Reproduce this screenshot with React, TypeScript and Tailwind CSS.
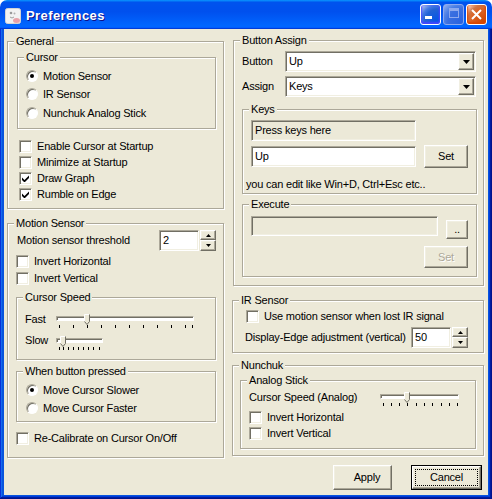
import type { ReactNode } from 'react';

const sunken =
  'border border-t-[#ACA899] border-l-[#ACA899] border-b-white border-r-white shadow-[inset_1px_1px_0_#716F64,inset_-1px_-1px_0_#F1EFE2]';
const raised =
  'bg-[#ECE9D8] border border-t-white border-l-white border-b-[#716F64] border-r-[#716F64] shadow-[inset_-1px_-1px_0_#ACA899,inset_1px_1px_0_#F1EFE2]';

function Group({ title, className = '', children }: { title: string; className?: string; children?: ReactNode }) {
  return (
    <fieldset className={`shrink-0 border border-[#ACA899] shadow-[inset_1px_1px_0_#fff,1px_1px_0_#fff] ${className}`}>
      <legend className="ml-[6px] px-[2px] bg-[#ECE9D8] leading-[13px]">{title}</legend>
      {children}
    </fieldset>
  );
}

function Check({ label, checked = false, className = '' }: { label: string; checked?: boolean; className?: string }) {
  return (
    <div className={`flex items-center h-[16px] gap-[5px] ${className}`}>
      <span className={`w-[13px] h-[13px] bg-white flex items-center justify-center ${sunken}`}>
        {checked && (
          <svg width="7" height="7" viewBox="0 0 7 7">
            <polygon points="0,2.5 2.5,5 7,0.5 7,3 2.5,7.5 0,5" fill="#000" />
          </svg>
        )}
      </span>
      <span>{label}</span>
    </div>
  );
}

function Radio({ label, checked = false, className = '' }: { label: string; checked?: boolean; className?: string }) {
  return (
    <div className={`flex items-center h-[18px] gap-[5px] ${className}`}>
      <span className="w-[12px] h-[12px] rounded-full bg-white border border-t-[#ACA899] border-l-[#ACA899] border-r-white border-b-white shadow-[inset_1px_1px_0_#716F64] flex items-center justify-center">
        {checked && <span className="w-[4px] h-[4px] rounded-full bg-black" />}
      </span>
      <span>{label}</span>
    </div>
  );
}

function Button({ children, className = '', disabled = false }: { children: ReactNode; className?: string; disabled?: boolean }) {
  return (
    <div
      className={`shrink-0 flex items-center justify-center ${raised} ${
        disabled ? 'text-[#ACA899] [text-shadow:1px_1px_0_#fff]' : ''
      } ${className}`}
    >
      {children}
    </div>
  );
}

function Combo({ value }: { value: string }) {
  return (
    <div className={`w-[191px] h-[21px] bg-white flex items-center p-[1px] ${sunken}`}>
      <span className="flex-1 pl-[2px]">{value}</span>
      <span className={`w-[16px] h-[17px] flex items-center justify-center ${raised}`}>
        <svg width="7" height="4" viewBox="0 0 7 4">
          <path d="M0 0h7L3.5 4z" fill="#000" />
        </svg>
      </span>
    </div>
  );
}

function Spin({ value }: { value: string }) {
  return (
    <div className="flex h-[21px] shrink-0">
      <div className={`w-[40px] h-full bg-white flex items-center pl-[3px] ${sunken}`}>{value}</div>
      <div className="w-[16px] ml-px flex flex-col">
        <span className={`h-[10px] flex items-center justify-center ${raised}`}>
          <svg width="5" height="3" viewBox="0 0 5 3">
            <path d="M2.5 0L5 3H0z" fill="#000" />
          </svg>
        </span>
        <span className={`h-[11px] flex items-center justify-center ${raised}`}>
          <svg width="5" height="3" viewBox="0 0 5 3">
            <path d="M0 0h5L2.5 3z" fill="#000" />
          </svg>
        </span>
      </div>
    </div>
  );
}

// classic trackbar: sunken channel, pointer thumb, tick row underneath
function Trackbar({ className, thumb, ticks }: { className: string; thumb: number; ticks: number[] }) {
  return (
    <div className={`relative h-[16px] shrink-0 flex flex-col ${className}`}>
      <div className="shrink-0 mt-[2px] h-[5px] bg-white border border-t-[#ACA899] border-l-[#ACA899] border-b-white border-r-white shadow-[inset_1px_1px_0_#716F64]" />
      <div className="shrink-0 flex mt-[4px] h-[3px]">
        {ticks.map((x, i) => (
          <span
            key={x}
            className="block w-px h-[3px] bg-black shrink-0"
            style={{ marginLeft: i === 0 ? x : x - ticks[i - 1] - 1 }}
          />
        ))}
      </div>
      <svg className="absolute top-0" style={{ left: thumb }} width="6" height="11" viewBox="0 0 6 11">
        <path d="M0.5 0.5h5v7l-2.5 3l-2.5-3z" fill="#ECE9D8" />
        <path d="M0.5 7.5v-7h4.5" stroke="#fff" fill="none" />
        <path d="M5.5 0.5v7l-2.5 3l-2.5-3" stroke="#716F64" fill="none" />
      </svg>
    </div>
  );
}

function TitleBar() {
  return (
    <div className="h-[29px] shrink-0 rounded-t-[7px] flex items-center pl-[5px] pr-[5px] pt-[2px] bg-[linear-gradient(180deg,#0997ff,#0053ee_8%,#0050ee_40%,#06f_88%,#06f_93%,#005bff_95%,#003dd7_96%,#003dd7)]">
      <svg width="16" height="16" viewBox="0 0 16 16">
        <rect x="0.5" y="0.5" width="15" height="15" rx="2" fill="#F2F2F2" stroke="#D4D4D4" />
        <circle cx="6" cy="5" r="1.3" fill="#9A9A9A" />
        <circle cx="9.5" cy="5.5" r="1" fill="#B0B0B0" />
        <path d="M5 9 Q7 11 9 9" stroke="#A0A0A0" fill="none" />
        <ellipse cx="11.5" cy="12.5" rx="3.5" ry="2.5" fill="#E8A0A8" />
      </svg>
      <span className="ml-[5px] text-white font-bold text-[13px] leading-[15px] tracking-[0.4px] [text-shadow:1px_1px_0_#0F1089]">
        Preferences
      </span>
      <div className="ml-auto flex gap-[2px] -mt-[2px]">
        <div className="w-[21px] h-[21px] rounded-[3px] border border-white flex items-end bg-[radial-gradient(circle_at_90%_90%,#0054e9_0%,#2263d5_55%,#4479e4_70%,#a3bbec_90%,#fff_100%)] shadow-[inset_0_-1px_2px_1px_#4646ff]">
          <span className="w-[7px] h-[3px] bg-white ml-[4px] mb-[5px]" />
        </div>
        {/* maximize is disabled: faded border and glyph */}
        <div className="w-[21px] h-[21px] rounded-[3px] border border-[#8DA9EE] flex items-start justify-center bg-[radial-gradient(circle_at_90%_90%,#2a63e0_0%,#3a6fe0_55%,#4d80e6_70%,#7da0ea_90%,#9fb8f0_100%)]">
          <span className="mt-[3px] w-[10px] h-[10px] border border-[#8DA9EE] border-t-[3px]" />
        </div>
        <div className="w-[21px] h-[21px] rounded-[3px] border border-white flex items-center justify-center bg-[radial-gradient(circle_at_90%_90%,#cc4600_0%,#dc6527_55%,#cd7546_70%,#ffccb2_90%,#fff_100%)] shadow-[inset_0_-1px_2px_1px_#da4600]">
          <svg width="11" height="11" viewBox="0 0 11 11">
            <path d="M1 1L10 10M10 1L1 10" stroke="#fff" strokeWidth="2" />
          </svg>
        </div>
      </div>
    </div>
  );
}

export default function App() {
  return (
    <div className="w-[492px] h-[499px] flex flex-col font-['Liberation_Sans',Arial,sans-serif] text-[11px] leading-[13px] tracking-[-0.2px] text-black">
      <TitleBar />
      <div className="flex-1 flex flex-col px-[4px] pb-[4px] bg-[#0855DD] shadow-[inset_-1px_-1px_#00138c,inset_1px_0_#0831d9,inset_-2px_-2px_#001ea0,inset_2px_0_#166aee,inset_-3px_-3px_#003bda,inset_3px_0_#0855dd]">
        <div className="flex-1 flex flex-col bg-[#ECE9D8]">
          <div className="flex pl-[3px] pt-[6px]">
            {/* left column */}
            <div className="w-[217px] flex flex-col gap-[8px]">
              <Group title="General" className="h-[174px]">
                <Group title="Cursor" className="mt-[3px] ml-[9px] w-[199px] h-[78px]">
                  <div className="flex flex-col mt-[3px] ml-[8px]">
                    <Radio checked label="Motion Sensor" />
                    <Radio label="IR Sensor" />
                    <Radio label="Nunchuk Analog Stick" className="mt-px" />
                  </div>
                </Group>
                <div className="flex flex-col mt-[9px] ml-[11px]">
                  <Check label="Enable Cursor at Startup" />
                  <Check label="Minimize at Startup" />
                  <Check checked label="Draw Graph" />
                  <Check checked label="Rumble on Edge" />
                </div>
              </Group>

              <Group title="Motion Sensor" className="h-[241px]">
                <div className="flex items-center justify-between h-[21px] pl-[9px] pr-[7px]">
                  <span>Motion sensor threshold</span>
                  <Spin value="2" />
                </div>
                <div className="flex flex-col mt-[2px] ml-[8px]">
                  <Check label="Invert Horizontal" />
                  <Check label="Invert Vertical" className="mt-px" />
                </div>
                <Group title="Cursor Speed" className="mt-[5px] ml-[8px] w-[200px] h-[69px]">
                  <div className="flex mt-[10px] pl-[8px]">
                    <span className="w-[31px] -mt-px">Fast</span>
                    <Trackbar className="w-[138px]" thumb={28} ticks={[3, 17, 31, 45, 59, 73, 87, 101, 115, 129, 136]} />
                  </div>
                  <div className="flex mt-[6px] pl-[8px]">
                    <span className="w-[31px] -mt-[2px]">Slow</span>
                    <Trackbar className="w-[47px]" thumb={4} ticks={[3, 7, 12, 17, 22, 27, 32, 37, 43]} />
                  </div>
                </Group>
                <Group title="When button pressed" className="mt-[5px] ml-[8px] w-[200px] h-[57px]">
                  <div className="flex flex-col mt-[3px] ml-[9px]">
                    <Radio checked label="Move Cursor Slower" />
                    <Radio label="Move Cursor Faster" />
                  </div>
                </Group>
                <Check label="Re-Calibrate on Cursor On/Off" className="mt-[8px] ml-[8px]" />
              </Group>
            </div>

            {/* right column */}
            <div className="w-[252px] ml-[8px] flex flex-col">
              <Group title="Button Assign" className="-mt-px ml-px w-[251px] h-[252px]">
                <div className="flex items-center mt-[4px] pl-[8px]">
                  <span className="w-[43px]">Button</span>
                  <Combo value="Up" />
                </div>
                <div className="flex items-center mt-[4px] pl-[8px]">
                  <span className="w-[43px]">Assign</span>
                  <Combo value="Keys" />
                </div>
                <Group title="Keys" className="mt-[6px] ml-[8px] w-[235px] h-[91px]">
                  <div className={`mt-[4px] ml-[8px] w-[165px] h-[21px] bg-[#ECE9D8] flex items-center pl-[3px] ${sunken}`}>
                    Press keys here
                  </div>
                  <div className="flex items-center mt-[4px] ml-[8px]">
                    <div className={`w-[165px] h-[21px] bg-white flex items-center pl-[3px] ${sunken}`}>Up</div>
                    <Button className="ml-[8px] w-[44px] h-[23px]">Set</Button>
                  </div>
                  <div className="mt-[10px] ml-[3px]">you can edit like Win+D, Ctrl+Esc etc..</div>
                </Group>
                <Group title="Execute" className="mt-[4px] ml-[8px] w-[235px] h-[79px]">
                  <div className="flex items-start mt-[5px] ml-[8px]">
                    <div className={`w-[187px] h-[20px] bg-[#ECE9D8] ${sunken}`} />
                    <Button className="ml-[8px] mt-[4px] w-[22px] h-[19px]">..</Button>
                  </div>
                  <Button disabled className="mt-[7px] ml-[181px] w-[44px] h-[22px]">
                    Set
                  </Button>
                </Group>
              </Group>

              <Group title="IR Sensor" className="mt-[8px] h-[59px]">
                <Check label="Use motion sensor when lost IR signal" className="mt-px ml-[13px]" />
                <div className="flex items-center mt-[3px] ml-[12px]">
                  <span className="w-[166px]">Display-Edge adjustment (vertical)</span>
                  <Spin value="50" />
                </div>
              </Group>

              <Group title="Nunchuk" className="mt-[6px] h-[97px]">
                <Group title="Analog Stick" className="mt-[2px] ml-[7px] w-[236px] h-[75px]">
                  <div className="flex mt-[5px] pl-[8px]">
                    <span className="w-[131px] -mt-px">Cursor Speed (Analog)</span>
                    <Trackbar className="w-[79px]" thumb={24} ticks={[3, 11, 19, 27, 36, 44, 52, 61, 69, 77]} />
                  </div>
                  <div className="flex flex-col mt-px ml-[8px]">
                    <Check label="Invert Horizontal" />
                    <Check label="Invert Vertical" />
                  </div>
                </Group>
              </Group>
            </div>
          </div>

          <div className="flex justify-end items-start mt-[7px] pr-[6px]">
            <Button className="w-[59px] h-[25px] pl-[9px]">Apply</Button>
            <div className="ml-[19px] w-[71px] h-[25px] border border-black">
              <div className={`h-full p-[2px] ${raised}`}>
                <div className="h-full border border-dotted border-black flex items-center justify-center">Cancel</div>
              </div>
            </div>
          </div>
        </div>
      </div>
    </div>
  );
}
